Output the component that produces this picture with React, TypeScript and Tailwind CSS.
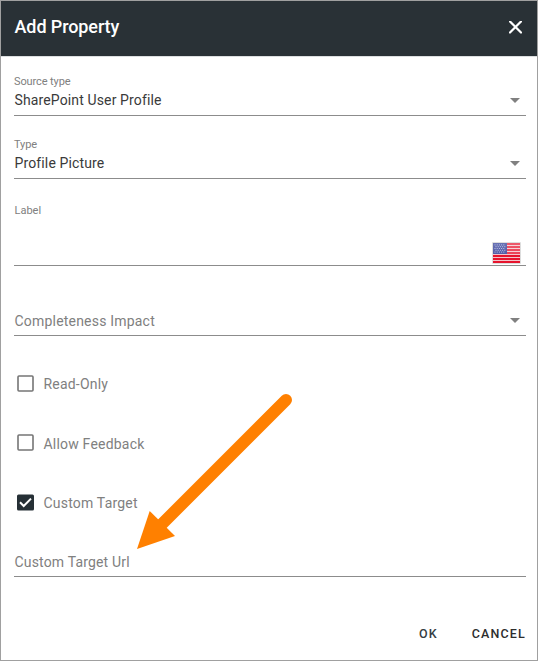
import type { ReactNode } from "react";

const Caret = () => (
  <svg className="mr-[6px] h-[5px] w-[10px] shrink-0" viewBox="0 0 10 5">
    <path d="M0 0h10L5 5z" fill="#808080" />
  </svg>
);

function Field({ className, children }: { className: string; children: ReactNode }) {
  return <div className={`flex flex-col justify-end border-b border-[#8c8c8c] ${className}`}>{children}</div>;
}

function SelectField({ label, value, className }: { label: string; value: string; className: string }) {
  return (
    <Field className={className}>
      <span className="text-[11px] leading-[14px] tracking-[-0.1px] text-[#808080]">{label}</span>
      <div className="flex h-[26px] items-center justify-between pb-[4px]">
        <span className="pl-[0.5px] text-[14px] leading-5 tracking-[0.13px] text-[#3a3a3a]">{value}</span>
        <Caret />
      </div>
    </Field>
  );
}

function CheckRow({ label, checked = false, className }: { label: string; checked?: boolean; className: string }) {
  return (
    <label className={`flex items-center gap-[9px] pl-[3px] ${className}`}>
      <svg className="h-[17px] w-[17px]" viewBox="0 0 17 17">
        {checked ? (
          <>
            <rect y="0.500" width="17" height="16" rx="1.500" fill="#263036" />
            <path d="M3 8.300l3.700 3.700L14 4.600" fill="none" stroke="#fff" strokeWidth="2" />
          </>
        ) : (
          <rect x="1" y="1" width="15" height="15" rx="1" fill="none" stroke="#757575" strokeWidth="1.6" />
        )}
      </svg>
      <span className="relative top-px pl-[0.5px] text-[14px] leading-5 tracking-[0.2px] text-[#808080]">{label}</span>
    </label>
  );
}

const Flag = () => (
  <svg className="h-[22px] w-[29px]" viewBox="0 0 29 22">
    <defs>
      <linearGradient id="shine" x1="0" y1="0" x2="0" y2="1">
        <stop offset="0" stopColor="#fff" stopOpacity=".3" />
        <stop offset=".54" stopColor="#fff" stopOpacity=".2" />
        <stop offset=".55" stopColor="#fff" stopOpacity="0" />
      </linearGradient>
    </defs>
    <rect width="29" height="22" rx="1" fill="#ddd" />
    <rect x="1" y="1" width="27" height="20" fill="#f3c4cb" />
    {[0, 1, 2, 3, 4, 5, 6].map((i) => (
      <rect key={i} x="1" y={1 + i * 3} width="27" height="2" fill="#e6142d" />
    ))}
    <rect x="1" y="1" width="14" height="11" fill="#283593" />
    {[0, 1, 2, 3, 4].map((r) =>
      [0, 1, 2, 3, 4].map((c) => (
        <rect key={`${r}-${c}`} x={2.5 + c * 2.2 + (r % 2)} y={2.4 + r * 1.8} width="1" height="1" fill="#a8b0dc" />
      )),
    )}
    <rect x="1" y="1" width="27" height="20" fill="url(#shine)" />
  </svg>
);

export default function App() {
  return (
    <div className="relative flex h-[661px] w-[538px] flex-col border border-[#a0a0a0] bg-white font-['Roboto',sans-serif]">
      <header className="flex h-[56px] shrink-0 items-center justify-between border-b border-[#dcdfe0] bg-[#293136] pr-[15.5px] pb-[3px] pl-[13.5px]">
        <h1 className="text-[18px] leading-6 font-medium tracking-[-0.1px] text-white">Add Property</h1>
        <svg className="h-[13px] w-[13px]" viewBox="0 0 13 13">
          <path d="M1 .5l11 11M12 .5L1 11.500" stroke="#fff" strokeWidth="2.2" strokeLinecap="round" />
        </svg>
      </header>
      <main className="flex flex-col pr-[11px] pl-[13px]">
        <SelectField label="Source type" value="SharePoint User Profile" className="h-[59px]" />
        <SelectField label="Type" value="Profile Picture" className="h-[63px]" />
        <Field className="h-[87px]">
          <span className="pl-[0.5px] text-[11px] leading-[14px] tracking-[0px] text-[#808080]">Label</span>
          <div className="flex h-[47px] items-end justify-end pr-[5px] pb-px">
            <Flag />
          </div>
        </Field>
        <Field className="h-[70px]">
          <div className="flex h-[27px] items-center justify-between pb-[2px]">
            <span className="pt-px pl-[0.5px] text-[14px] leading-5 tracking-[0.2px] text-[#808080]">Completeness Impact</span>
            <Caret />
          </div>
        </Field>
        <CheckRow label="Read-Only" className="mt-[17px] h-[60px]" />
        <CheckRow label="Allow Feedback" className="h-[59px]" />
        <CheckRow label="Custom Target" checked className="h-[60px]" />
        <Field className="h-[45px]">
          <span className="pb-[4px] pl-[0.5px] text-[14px] leading-5 tracking-[0.17px] text-[#808080]">Custom Target Url</span>
        </Field>
      </main>
      <footer className="flex h-[83px] items-center justify-end gap-[34px] pt-[30px] pr-[11px]">
        <button className="text-[12.500px] leading-4 font-medium tracking-[1.150px] text-[#353d42]">OK</button>
        <button className="text-[12.500px] leading-4 font-medium tracking-[1.150px] text-[#2d2d2d]">CANCEL</button>
      </footer>
      <svg className="absolute top-[379px] left-[119px] h-[180px] w-[190px]" viewBox="120 380 190 180">
        <path d="M286 400L158 528" stroke="#ff8000" strokeWidth="12" strokeLinecap="round" />
        <path d="M137 549l12.700-38L175 536z" fill="#ff8000" />
      </svg>
    </div>
  );
}
